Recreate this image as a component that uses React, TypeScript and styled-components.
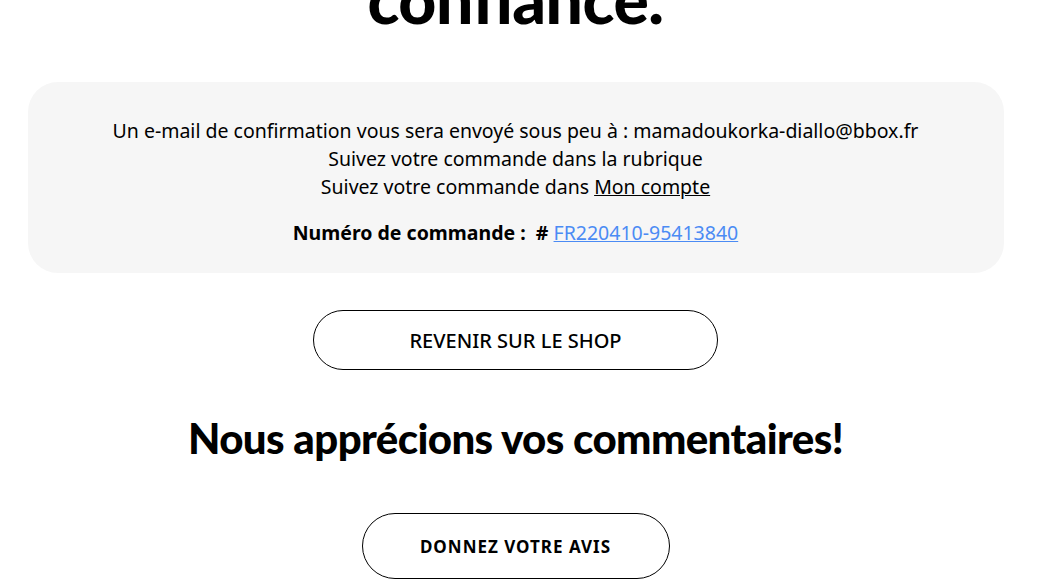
import React from "react";
import styled, { createGlobalStyle } from "styled-components";

const Global = createGlobalStyle`
  html, body { margin: 0; padding: 0; background: #fff; overflow: hidden; }
  body { font-family: "Noto Sans", "Open Sans", sans-serif; color: #000; }
`;

const Page = styled.div`
  width: 1031px;
  display: flex;
  flex-direction: column;
  align-items: center;
`;

const TopTitle = styled.h1`
  margin: -36px 0 0;
  font-family: "Lato", sans-serif;
  font-weight: 900;
  font-size: 66px;
  line-height: 70px;
  letter-spacing: -0.5px;
  text-align: center;
`;

const Card = styled.section`
  box-sizing: border-box;
  margin-top: 48px;
  width: 976px;
  height: 191px;
  background: #f6f6f6;
  border-radius: 30px;
  padding: 35px 20px 0;
  display: flex;
  flex-direction: column;
  align-items: center;
  text-align: center;
  font-size: 19.5px;
  line-height: 28px;
`;

const Line = styled.p`
  margin: 0;
`;

const Account = styled.a`
  color: #000;
  text-decoration: underline;
`;

const OrderLine = styled.p`
  margin: 18px 0 0;
  font-weight: 700;
`;

const OrderLink = styled.a`
  color: #4b8bf4;
  font-weight: 400;
  text-decoration: underline;
`;

const Pill = styled.button<{ $w: number; $h: number; $size: number; $spacing?: number; $weight?: number }>`
  box-sizing: border-box;
  width: ${(p) => p.$w}px;
  height: ${(p) => p.$h}px;
  border: 1px solid #000;
  border-radius: 40px;
  background: #fff;
  color: #000;
  font-family: "Noto Sans", sans-serif;
  font-size: ${(p) => p.$size}px;
  font-weight: ${(p) => p.$weight ?? 500};
  letter-spacing: ${(p) => p.$spacing ?? 0}px;
  display: flex;
  align-items: center;
  justify-content: center;
  padding: 0;
  cursor: pointer;
`;

const ShopButton = styled(Pill)`
  margin-top: 37px;
`;

const FeedbackTitle = styled.h2`
  margin: 42px 0 0;
  font-family: "Lato", sans-serif;
  font-weight: 900;
  font-size: 42px;
  line-height: 52px;
  letter-spacing: -0.6px;
  text-align: center;
`;

const ReviewButton = styled(Pill)`
  margin-top: 49px;
`;

export default function App() {
  return (
    <>
      <Global />
      <Page>
        <TopTitle>confiance.</TopTitle>
        <Card>
          <Line>Un e-mail de confirmation vous sera envoyé sous peu à : mamadoukorka-diallo@bbox.fr</Line>
          <Line>Suivez votre commande dans la rubrique</Line>
          <Line>
            Suivez votre commande dans <Account href="#">Mon compte</Account>
          </Line>
          <OrderLine>
            Numéro de commande :&nbsp; # <OrderLink href="#">FR220410-95413840</OrderLink>
          </OrderLine>
        </Card>
        <ShopButton $w={405} $h={60} $size={20}>REVENIR SUR LE SHOP</ShopButton>
        <FeedbackTitle>Nous apprécions vos commentaires!</FeedbackTitle>
        <ReviewButton $w={308} $h={66} $size={17} $spacing={1} $weight={700}>DONNEZ VOTRE AVIS</ReviewButton>
      </Page>
    </>
  );
}
